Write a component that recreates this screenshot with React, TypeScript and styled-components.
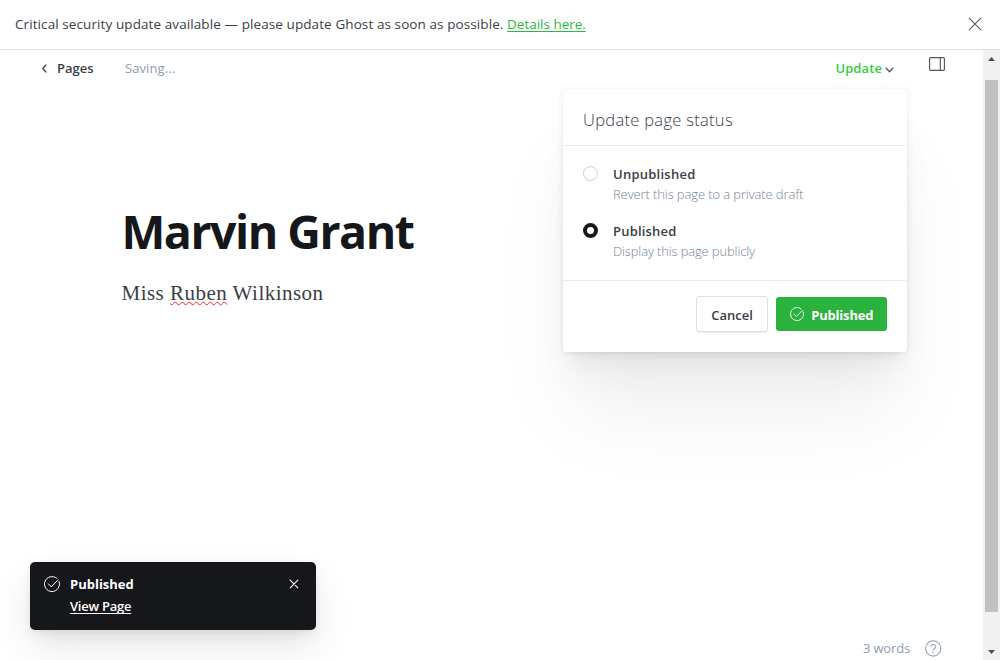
import React from "react";
import styled, { createGlobalStyle } from "styled-components";

const Global = createGlobalStyle`
  * { box-sizing: border-box; }
  html, body, #root { height: 100%; }
  body { margin: 0; overflow: hidden; background: #fff; color: #394047; font-family: "Open Sans", "Noto Sans", sans-serif; font-size: 13px; }
`;

const Text = styled.span<{ $size?: number; $weight?: number; $color?: string; $track?: number; $line?: number }>`
  font-size: ${p => p.$size ?? 13}px;
  font-weight: ${p => p.$weight ?? 400};
  color: ${p => p.$color ?? "#394047"};
  letter-spacing: ${p => p.$track ?? 0}px;
  line-height: ${p => p.$line ?? 20}px;
  white-space: nowrap;
`;
const Link = styled(Text).attrs({ as: "a" })`
  text-decoration: underline;
  text-decoration-skip-ink: none;
  text-underline-offset: 2px;
  text-decoration-thickness: 1px;
`;
const Page = styled.div`
  display: flex;
  flex-direction: column;
  width: 1000px;
  height: 660px;
  overflow: hidden;
`;
const Banner = styled.header`
  display: flex;
  align-items: center;
  flex: 0 0 50px;
  padding: 0 18px 1px 15px;
  border-bottom: 1px solid #dddedf;
`;
const Spacer = styled.div`flex: 1;`;
const Body = styled.div`
  display: flex;
  flex: 1;
  min-height: 0;
`;
const Editor = styled.main`
  position: relative;
  display: flex;
  flex-direction: column;
  flex: 1;
  overflow: hidden;
`;
const Toolbar = styled.nav`
  display: flex;
  align-items: flex-start;
  height: 56px;
  padding: 8px 38px 0 41px;
`;
const Back = styled.div`
  display: flex;
  align-items: center;
  gap: 9px;
  width: 84px;
`;
const UpdateTrigger = styled.div`
  display: flex;
  align-items: center;
  gap: 3px;
  margin-right: 35px;
  svg { margin-top: 4px; }
`;
const Canvas = styled.article`
  flex: 1;
  padding: 93px 121.5px 0;
`;
const Title = styled.h1`
  margin: 0;
  font-size: 46.5px;
  line-height: 64px;
  font-weight: 700;
  letter-spacing: -1.5px;
  color: #15171a;
`;
const Paragraph = styled.p`
  margin: 14px 0 0;
  font: 21px/32px "Liberation Serif", serif;
  letter-spacing: 0.48px;
  color: #394047;
`;
const Misspelled = styled.span`
  text-decoration: underline wavy #f22 1px;
  text-decoration-skip-ink: none;
  text-underline-offset: 1px;
`;
const Footer = styled.footer`
  display: flex;
  justify-content: flex-end;
  align-items: center;
  gap: 15px;
  height: 24px;
  padding-right: 41px;
`;
const Scrollbar = styled.div`
  display: flex;
  flex-direction: column;
  align-items: center;
  width: 17px;
  background: #f1f1f1;
`;
const ScrollButton = styled.div<{ $h: number }>`
  display: flex;
  justify-content: center;
  align-items: center;
  height: ${p => p.$h}px;
`;
const Thumb = styled.div`
  width: 13px;
  height: 532px;
  margin-top: 13px;
  background: #c1c1c1;
`;
const Popover = styled.section`
  position: absolute;
  left: 563px;
  top: 39px;
  width: 344px;
  height: 263px;
  border-radius: 4px;
  background: #fff;
  box-shadow:
    0 0 7px rgba(0,0,0,.08),
    0 5px 5px -5px rgba(0,0,0,.03),
    0 9px 10px -5px rgba(0,0,0,.03),
    0 17px 18px -5px rgba(0,0,0,.03),
    0 32px 34px -5px rgba(0,0,0,.035),
    0 70px 80px -5px rgba(0,0,0,.055);
`;
const PopoverHead = styled.div`
  height: 57px;
  padding: 19px 20px 0;
  border-bottom: 1px solid #e8eaec;
`;
const Options = styled.div`
  display: flex;
  flex-direction: column;
  gap: 16px;
  height: 135px;
  padding: 18px 20px 0;
  border-bottom: 1px solid #e8eaec;
`;
const Option = styled.label`
  display: flex;
  gap: 15px;
  height: 41px;
`;
const OptionText = styled.div`
  display: flex;
  flex-direction: column;
`;
const Radio = styled.span<{ $on?: boolean }>`
  width: 15px;
  height: 15px;
  margin-top: 2px;
  border-radius: 50%;
  border: ${p => (p.$on ? "4px solid #15171a" : "1px solid #c8d0d7")};
`;
const Actions = styled.div`
  display: flex;
  justify-content: flex-end;
  align-items: center;
  gap: 8px;
  padding: 15px 20px 0;
`;
const Button = styled.button<{ $primary?: boolean }>`
  display: flex;
  align-items: center;
  justify-content: center;
  gap: 7.5px;
  width: ${p => (p.$primary ? 111 : 72)}px;
  height: ${p => (p.$primary ? 34 : 36)}px;
  padding: 0;
  border: ${p => (p.$primary ? "0" : "1px solid #dae1e6")};
  border-radius: 3px;
  font-family: inherit;
  background: ${p => (p.$primary ? "#2ab23c" : "#fff")};
  box-shadow: ${p => (p.$primary ? "none" : "0 1px 1px rgba(0,0,0,.06)")};
  span { padding-top: 2px; }
`;
const Toast = styled.aside`
  position: absolute;
  left: 30px;
  top: 512px;
  display: flex;
  align-items: flex-start;
  gap: 10px;
  width: 286px;
  height: 68px;
  padding: 12px 17px 0 14px;
  border-radius: 5px;
  background: #15171a;
  box-shadow: 0 0 7px rgba(0,0,0,.05), 0 8px 16px -5px rgba(0,0,0,.09), 0 18px 40px rgba(0,0,0,.09);
`;
const ToastText = styled.div`
  display: flex;
  flex-direction: column;
  align-items: flex-start;
  flex: 1;
`;
const Svg = styled.svg<{ $top?: number }>`
  display: block;
  flex: none;
  margin-top: ${p => p.$top ?? 0}px;
  fill: none;
  stroke-linecap: round;
  stroke-linejoin: round;
`;

function Cross({ size, color, top }: { size: number; color: string; top?: number }) {
  const far = size - 1.2;
  return (
    <Svg width={size} height={size} viewBox={`0 0 ${size} ${size}`} stroke={color} strokeWidth="1.1" $top={top}>
      <path d={`M1.2 1.2 ${far} ${far}M${far} 1.2 1.2 ${far}`} />
    </Svg>
  );
}

function CheckCircle({ size, top }: { size: number; top?: number }) {
  return (
    <Svg width={size} height={size} viewBox="0 0 16 16" stroke="#fff" strokeWidth="1" $top={top}>
      <path d="M15.1 5.6A7.5 7.5 0 1 1 12.6 2.1" />
      <path d="M4.4 7.9 7.2 10.9 14.2 3.9" />
    </Svg>
  );
}

export default function App() {
  return (
    <Page>
      <Global />
      <Banner>
        <Text $size={13.5} $track={0.09}>Critical security update available — please update Ghost as soon as possible.&nbsp;</Text>
        <Link $size={13.5} $color="#2bba3c" $track={-0.02}>Details here.</Link>
        <Spacer />
        <Cross size={14} color="#54595f" />
      </Banner>
      <Body>
        <Editor>
          <Toolbar>
            <Back>
              <Svg width="7" height="9" viewBox="0 0 7 9" stroke="#394047" strokeWidth="1.2">
                <path d="M5 1 1.7 4.5 5 8" />
              </Svg>
              <Text $weight={600}>Pages</Text>
            </Back>
            <Text $color="#8e9cac" $track={0.08}>Saving...</Text>
            <Spacer />
            <UpdateTrigger>
              <Text $weight={600} $color="#30cf43" $track={0.1}>Update</Text>
              <Svg width="9" height="6" viewBox="0 0 9 6" stroke="#54595f" strokeWidth="1.3">
                <path d="M1 1 4.5 4.7 8 1" />
              </Svg>
            </UpdateTrigger>
            <Svg width="16" height="14" viewBox="0 0 16 14" stroke="#54595f" strokeWidth="1.15" $top={-1}>
              <rect x=".6" y=".6" width="14.8" height="12.8" rx="1" />
              <path d="M11.3 1v12" />
            </Svg>
          </Toolbar>
          <Canvas>
            <Title>Marvin Grant</Title>
            <Paragraph>Miss <Misspelled>Ruben</Misspelled> Wilkinson</Paragraph>
          </Canvas>
          <Footer>
            <Text $color="#8e9cac" $track={-0.15}>3 words</Text>
            <Svg width="17" height="17" viewBox="0 0 17 17" stroke="#9aa7b5" strokeWidth="1.1">
              <circle cx="8.2" cy="8.5" r="7.6" />
              <path d="M5.9 6.7a2.3 2.3 0 1 1 3.4 2c-.8.4-1.1.8-1.1 1.6" />
              <circle cx="8.2" cy="12.3" r=".3" />
            </Svg>
          </Footer>
          <Popover>
            <PopoverHead><Text $size={16.5} $weight={360} $line={24} $track={0.3}>Update page status</Text></PopoverHead>
            <Options>
              <Option>
                <Radio />
                <OptionText>
                  <Text $weight={600} $track={0.25}>Unpublished</Text>
                  <Text $weight={300} $color="#738396" $track={-0.11}>Revert this page to a private draft</Text>
                </OptionText>
              </Option>
              <Option>
                <Radio $on />
                <OptionText>
                  <Text $weight={600} $track={0.2}>Published</Text>
                  <Text $weight={300} $color="#738396" $track={-0.14}>Display this page publicly</Text>
                </OptionText>
              </Option>
            </Options>
            <Actions>
              <Button><Text $weight={600}>Cancel</Text></Button>
              <Button $primary>
                <CheckCircle size={14} />
                <Text $weight={700} $color="#fff" $track={-0.2}>Published</Text>
              </Button>
            </Actions>
          </Popover>
          <Toast>
            <CheckCircle size={16} top={2} />
            <ToastText>
              <Text $weight={700} $color="#fff">Published</Text>
              <Link $weight={600} $color="#fff" $line={24} $track={-0.25}>View Page</Link>
            </ToastText>
            <Cross size={10} color="#fff" top={5} />
          </Toast>
        </Editor>
        <Scrollbar>
          <ScrollButton $h={17}>
            <Svg width="7" height="4" viewBox="0 0 7 4"><path d="M0 4 3.5 0 7 4z" fill="#505050" /></Svg>
          </ScrollButton>
          <Thumb />
          <Spacer />
          <ScrollButton $h={17}>
            <Svg width="7" height="4" viewBox="0 0 7 4"><path d="M0 0 3.5 4 7 0z" fill="#505050" /></Svg>
          </ScrollButton>
        </Scrollbar>
      </Body>
    </Page>
  );
}
